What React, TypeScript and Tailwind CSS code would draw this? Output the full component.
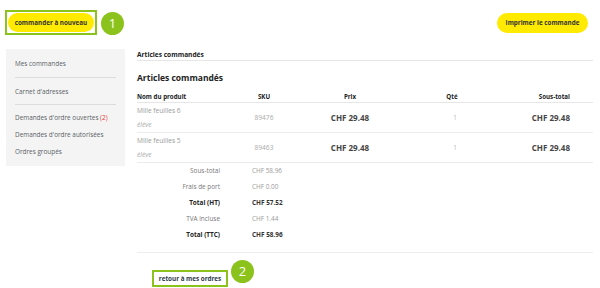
import React from "react";

const green = "border-[#8cc21c]";

export default function App() {
  return (
    <div className="w-[600px] h-[288px] bg-white overflow-hidden relative text-[#555]" style={{ fontFamily: '"Open Sans", "Liberation Sans", sans-serif' }}>
      {/* top bar */}
      <div className="flex items-center justify-between pt-[10px] pl-[5px] pr-[12px]">
        <div className="flex items-center">
          <div className={`border-2 ${green} px-[1px] h-[25px] flex items-center`}>
            <div className="h-[19px] w-[86px] rounded-full bg-[#ffea00] flex items-center justify-center text-[6.3px] font-bold text-[#333] whitespace-nowrap">
              commander à nouveau
            </div>
          </div>
          <div className="ml-[4px] mt-[2px] w-[23px] h-[23px] rounded-full bg-[#8cc21c] text-white flex items-center justify-center text-[13px] leading-none">
            1
          </div>
        </div>
        <div className="h-[20px] w-[91px] rounded-full bg-[#ffea00] flex items-center justify-center text-[6.3px] font-bold text-[#333] whitespace-nowrap">
          Imprimer le commande
        </div>
      </div>

      {/* body */}
      <div className="flex items-start mt-[14px]">
        {/* sidebar */}
        <div className="ml-[6px] w-[119px] h-[117px] bg-[#f4f4f4] px-[9px] pt-[6px] text-[6.4px] text-[#5a5f66] whitespace-nowrap">
          <div className="pb-[5px] border-b border-[#dcdcdc]">
            <div className="h-[17px] leading-[17px]">Mes commandes</div>
          </div>
          <div className="pt-[5px] pb-[4px] border-b border-[#dcdcdc]">
            <div className="h-[17px] leading-[17px]">Carnet d'adresses</div>
          </div>
          <div className="pt-[4px]">
            <div className="h-[17px] leading-[17px]">
              Demandes d'ordre ouvertes <span className="text-[#e53935]">(2)</span>
            </div>
            <div className="h-[17px] leading-[17px]">Demandes d'ordre autorisées</div>
            <div className="h-[17px] leading-[17px]">Ordres groupés</div>
          </div>
        </div>

        {/* main */}
        <div className="ml-[12px] w-[456px]">
          <div className="h-[12px] leading-[11px] border-b border-[#e6e6e6] text-[6.6px] font-bold text-[#222]">
            Articles commandés
          </div>
          <div className="mt-[10px] h-[14px] leading-[14px] text-[8.5px] font-bold text-[#222]">
            Articles commandés
          </div>

          {/* table header */}
          <div className="mt-[6px] grid grid-cols-[90px_74px_98px_106px_1fr] h-[12px] leading-[12px] border-b border-[#e6e6e6] text-[6.2px] font-bold text-[#222]">
            <div>Nom du produit</div>
            <div className="text-center">SKU</div>
            <div className="text-center">Prix</div>
            <div className="text-center">Qté</div>
            <div className="text-right pr-[23px]">Sous-total</div>
          </div>

          {[
            { name: "Mille feuilles 6", sku: "89476" },
            { name: "Mille feuilles 5", sku: "89463" },
          ].map((r) => (
            <div key={r.sku} className="grid grid-cols-[90px_74px_98px_106px_1fr] items-center h-[30px] border-b border-[#ececec]">
              <div className="text-[6.6px] text-[#9a9a9a] pt-[1px]">
                <div className="leading-[14px]">{r.name}</div>
                <div className="leading-[14px] italic text-[#aaa]">élève</div>
              </div>
              <div className="text-center text-[6.6px] text-[#aaa]">{r.sku}</div>
              <div className="text-center text-[8px] font-bold text-[#444]">CHF 29.48</div>
              <div className="text-center text-[6.5px] text-[#bbb] pl-[6px]">1</div>
              <div className="text-right pr-[23px] text-[8px] font-bold text-[#444]">CHF 29.48</div>
            </div>
          ))}

          {/* totals */}
          <div className="text-[6.4px]">
            {[
              { l: "Sous-total", v: "CHF 58.96", b: false },
              { l: "Frais de port", v: "CHF 0.00", b: false },
              { l: "Total (HT)", v: "CHF 57.52", b: true },
              { l: "TVA incluse", v: "CHF 1.44", b: false },
              { l: "Total (TTC)", v: "CHF 58.96", b: true },
            ].map((t) => (
              <div key={t.l} className="flex h-[16px] leading-[16px]">
                <div className={`w-[83px] text-right ${t.b ? "font-bold text-[#222]" : "text-[#777]"}`}>{t.l}</div>
                <div className={`ml-[32px] ${t.b ? "font-bold text-[#333]" : "text-[#9a9a9a]"}`}>{t.v}</div>
              </div>
            ))}
          </div>

          <div className="mt-[9px] border-t border-[#eeeeee]" />

          <div className="flex items-start mt-[7px] ml-[15px]">
            <div className={`mt-[10px] border-2 ${green} h-[17px] w-[76px] flex items-center justify-center text-[6.3px] font-bold text-[#2d3a4a] whitespace-nowrap`}>
              retour à mes ordres
            </div>
            <div className="ml-[3px] w-[23px] h-[23px] rounded-full bg-[#8cc21c] text-white flex items-center justify-center text-[13px] leading-none">
              2
            </div>
          </div>
        </div>
      </div>
    </div>
  );
}
